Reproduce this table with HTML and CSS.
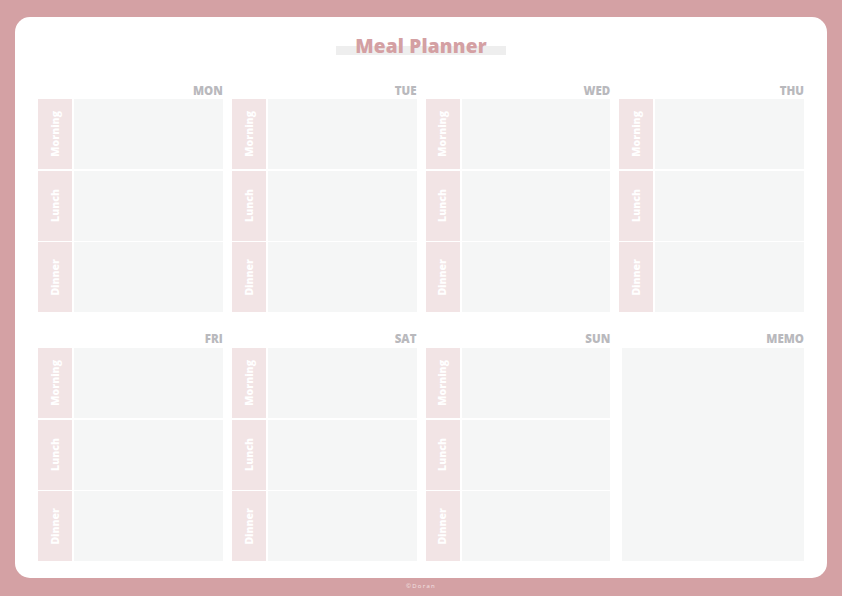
FILE: index.html
```html
<!DOCTYPE html>
<html>
<head>
<meta charset="utf-8">
<link rel="stylesheet" href="styles.css">
</head>
<body>
<div class="card">
  <div class="title-wrap"><h1 class="title">Meal Planner</h1></div>
  <div class="week">
    <div class="day"><div class="day-name">MON</div><div class="meals">
      <div class="meal"><div class="label"><span>Morning</span></div><div class="box"></div></div>
      <div class="meal"><div class="label"><span>Lunch</span></div><div class="box"></div></div>
      <div class="meal"><div class="label"><span>Dinner</span></div><div class="box"></div></div>
    </div></div>
    <div class="day"><div class="day-name">TUE</div><div class="meals">
      <div class="meal"><div class="label"><span>Morning</span></div><div class="box"></div></div>
      <div class="meal"><div class="label"><span>Lunch</span></div><div class="box"></div></div>
      <div class="meal"><div class="label"><span>Dinner</span></div><div class="box"></div></div>
    </div></div>
    <div class="day"><div class="day-name">WED</div><div class="meals">
      <div class="meal"><div class="label"><span>Morning</span></div><div class="box"></div></div>
      <div class="meal"><div class="label"><span>Lunch</span></div><div class="box"></div></div>
      <div class="meal"><div class="label"><span>Dinner</span></div><div class="box"></div></div>
    </div></div>
    <div class="day"><div class="day-name">THU</div><div class="meals">
      <div class="meal"><div class="label"><span>Morning</span></div><div class="box"></div></div>
      <div class="meal"><div class="label"><span>Lunch</span></div><div class="box"></div></div>
      <div class="meal"><div class="label"><span>Dinner</span></div><div class="box"></div></div>
    </div></div>
  </div>
  <div class="week week-2">
    <div class="day"><div class="day-name">FRI</div><div class="meals">
      <div class="meal"><div class="label"><span>Morning</span></div><div class="box"></div></div>
      <div class="meal"><div class="label"><span>Lunch</span></div><div class="box"></div></div>
      <div class="meal"><div class="label"><span>Dinner</span></div><div class="box"></div></div>
    </div></div>
    <div class="day"><div class="day-name">SAT</div><div class="meals">
      <div class="meal"><div class="label"><span>Morning</span></div><div class="box"></div></div>
      <div class="meal"><div class="label"><span>Lunch</span></div><div class="box"></div></div>
      <div class="meal"><div class="label"><span>Dinner</span></div><div class="box"></div></div>
    </div></div>
    <div class="day"><div class="day-name">SUN</div><div class="meals">
      <div class="meal"><div class="label"><span>Morning</span></div><div class="box"></div></div>
      <div class="meal"><div class="label"><span>Lunch</span></div><div class="box"></div></div>
      <div class="meal"><div class="label"><span>Dinner</span></div><div class="box"></div></div>
    </div></div>
    <div class="day memo"><div class="day-name">MEMO</div><div class="memo-box"></div></div>
  </div>
</div>
<div class="footer">©Doran</div>
</body>
</html>
```

FILE: styles.css
```css
html, body {
  margin: 0;
  padding: 0;
}
body {
  background: #d4a1a4;
  width: 842px;
  height: 596px;
  overflow: hidden;
  font-family: "Open Sans", "Lato", sans-serif;
}
.card {
  margin: 17px 15px 0 15px;
  width: 812px;
  height: 561px;
  background: #ffffff;
  border-radius: 15px;
  box-sizing: border-box;
  padding: 17px 23px 0 23px;
}
.title-wrap {
  text-align: center;
  height: 24px;
}
.title {
  display: inline-block;
  margin: 0;
  padding: 0 19px;
  font-size: 19px;
  line-height: 24px;
  font-weight: 800;
  color: #d4a0a3;
  letter-spacing: 0.2px;
  background: linear-gradient(to bottom, transparent 12px, #eeeeee 12px, #eeeeee 21px, transparent 21px);
}
.week {
  display: grid;
  grid-template-columns: repeat(4, 1fr);
  column-gap: 9px;
  margin-top: 26px;
}
.week-2 {
  margin-top: 20px;
}
.day-name {
  text-align: right;
  font-size: 11.5px;
  line-height: 14px;
  font-weight: 800;
  color: #b9b9bd;
  margin-bottom: 1px;
}
.week-2 .day-name {
  margin-bottom: 2px;
}
.meals {
  display: flex;
  flex-direction: column;
  gap: 1.5px;
}
.meal {
  display: flex;
  gap: 2px;
  height: 70px;
}
.label {
  width: 34px;
  flex: none;
  background: #f2e4e5;
  display: flex;
  align-items: center;
  justify-content: center;
}
.label span {
  writing-mode: vertical-rl;
  transform: rotate(180deg);
  color: #ffffff;
  font-size: 10.5px;
  font-weight: 800;
  line-height: 1;
}
.box {
  flex: 1;
  background: #f5f6f6;
}
.memo .memo-box {
  margin-left: 3px;
  height: 213px;
  background: #f5f6f6;
}
.footer {
  text-align: center;
  font-family: "Open Sans", sans-serif;
  font-size: 6px;
  letter-spacing: 1.3px;
  color: #f3e2e3;
  margin-top: 4px;
}
```
